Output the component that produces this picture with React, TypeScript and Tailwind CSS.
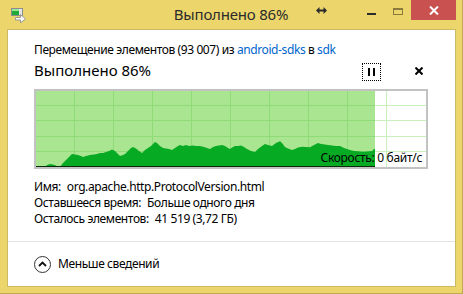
import React from "react";

const font = { fontFamily: '"Noto Sans", "Open Sans", sans-serif' };

// speed graph points (x, y) inside a 390x76 plot
const curve: [number, number][] = [
  [0, 76], [9, 76], [11, 74], [14, 73], [17, 73.5], [20, 74.5], [22, 76], [24, 76],
  [27, 72], [30, 69], [33, 66], [36, 63], [39, 63.5], [42, 64], [45, 65], [47, 66],
  [50, 65], [54, 64], [58, 63.5], [61, 63], [64, 62], [67, 62], [70, 61], [73, 60],
  [76, 58.5], [79, 60], [82, 63], [84, 65], [87, 64], [89, 63], [92, 60], [95, 57],
  [97, 56], [100, 57.5], [103, 60], [106, 62], [109, 59], [112, 57], [115, 55], [117, 53],
  [119, 51], [121, 52], [124, 55], [127, 57], [130, 57.5], [133, 58], [136, 59], [139, 57],
  [142, 55], [144, 54], [147, 55], [150, 54], [153, 55], [157, 54.5], [160, 55], [164, 55],
  [168, 56], [171, 57], [174, 58], [177, 56], [180, 55], [183, 54.5], [186, 54], [189, 55],
  [192, 57], [194, 58], [197, 56], [199, 55], [202, 55], [205, 54.5], [208, 56], [211, 58],
  [215, 60], [219, 61], [222, 58], [226, 55], [229, 53], [232, 54], [236, 55], [240, 52],
  [244, 50.3], [246, 52], [249, 56], [252, 57.5], [256, 59], [259, 58], [262, 56.5], [266, 55.7],
  [270, 56], [274, 56.3], [278, 54], [282, 52], [285, 53], [289, 53.5], [292, 54], [296, 54.5],
  [300, 55], [304, 55], [308, 57], [311, 58], [314, 59], [318, 60], [322, 60.3], [327, 60.7],
  [331, 60.5], [336, 60], [338, 58], [339, 58], [339, 76],
];

function TitleIcon() {
  return (
    <svg width="15" height="15" viewBox="0 0 15 15">
      <rect x="0.5" y="0.5" width="11" height="7" fill="#e6e6e6" stroke="#8c8c8c" />
      <rect x="1" y="1" width="7" height="2" fill="#9be59a" />
      <rect x="1" y="3" width="7" height="4" fill="#1faa3a" />
      <path d="M4.5 9.5h5v-3l5 4.25-5 4.25v-3h-5z" fill="#fafafa" stroke="#9a9a9a" />
    </svg>
  );
}

function Graph() {
  const W = 390;
  const H = 76;
  const done = 339;
  const vx = Array.from({ length: 9 }, (_, i) => 39 * (i + 1) - 0.5);
  const hy = Array.from({ length: 4 }, (_, i) => Math.round(15.2 * (i + 1)) - 0.5);
  return (
    <div className="relative w-[394px] h-[80px] border-2 border-[#c2c2c2] bg-white">
      <svg width={W} height={H} viewBox={`0 0 ${W} ${H}`} className="block">
        <rect x="0" y="0" width={done} height={H} fill="#aae592" />
        {vx.map((x) => (
          <line key={x} x1={x} x2={x} y1="0" y2={H} stroke={x < done ? "#8fdb78" : "#c9f0bd"} strokeWidth="1" />
        ))}
        {hy.map((y) => (
          <g key={y}>
            <line x1="0" x2={done} y1={y} y2={y} stroke="#8fdb78" strokeWidth="1" />
            <line x1={done} x2={W} y1={y} y2={y} stroke="#c9f0bd" strokeWidth="1" />
          </g>
        ))}
        <polygon points={curve.map((p) => p.join(",")).join(" ")} fill="#06aa23" />
        <line x1="0" x2={done} y1="75.5" y2="75.5" stroke="#0a2a0a" strokeWidth="1" />
      </svg>
      <span className="absolute right-[4px] bottom-[1px] text-[12px] leading-[16px] tracking-[-0.3px] text-black" style={font}>
        Скорость: 0 байт/с
      </span>
    </div>
  );
}

export default function App() {
  return (
    <div
      className="w-[463px] h-[294px] flex flex-col bg-[#ecd66c] border-r border-b border-[#c0aa52] overflow-hidden"
      style={font}
    >
      {/* title bar */}
      <div className="h-[29px] grid grid-cols-[1fr_auto_1fr] items-start">
        <div className="pl-[11px] pt-[8px]">
          <TitleIcon />
        </div>
        <div className="pt-[4px] text-[15px] leading-[20px] tracking-[-0.2px] text-[#2b2b2b]">Выполнено 86%</div>
        <div className="flex justify-end items-start pr-[6px]">
          <div className="w-[26px] h-[20px] flex items-center justify-center">
            <svg width="11" height="7" viewBox="0 0 11 7">
              <path d="M2 3.5h7" stroke="#2b2b2b" strokeWidth="2" />
              <path d="M0 3.5L3.5 0v7zM11 3.5L7.5 0v7z" fill="#2b2b2b" />
            </svg>
          </div>
          <div className="ml-[24px] w-[27px] h-[20px] flex items-center justify-center">
            <div className="mt-[7px] w-[9px] h-[2px] bg-[#2b2b2b]" />
          </div>
          <div className="w-[26px] h-[20px] flex items-start justify-center pt-[8px]">
            <div className="w-[10px] h-[7px] border border-t-2 border-[#8a7a3c]" />
          </div>
          <div className="w-[45px] h-[20px] bg-[#c9514f] flex items-center justify-center">
            <svg width="10" height="9" viewBox="0 0 10 9">
              <path d="M1 0.5l8 8M9 0.5l-8 8" stroke="#fff" strokeWidth="2" />
            </svg>
          </div>
        </div>
      </div>

      {/* client area */}
      <div className="ml-[7px] mr-[6px] mb-[6px] flex-1 flex flex-col bg-white border border-[#cdba62] text-black">
        <div className="pl-[26px] pr-[27px] pt-[12px]">
          <div className="text-[12px] leading-[16px] tracking-[-0.4px]">
            Перемещение элементов (93 007) из <span className="text-[#0066cc]">android-sdks</span> в{" "}
            <span className="text-[#0066cc]">sdk</span>
          </div>
          <div className="mt-[2px] flex items-start">
            <div className="flex-1 text-[15px] leading-[20px]">Выполнено 86%</div>
            <div className="mt-[3px] w-[19px] h-[18px] border border-dotted border-black flex items-center justify-center gap-[3px]">
              <div className="w-[2px] h-[8px] bg-black" />
              <div className="w-[2px] h-[8px] bg-black" />
            </div>
            <div className="ml-[33px] mr-[4px] mt-[6px] w-[10px] h-[10px] flex items-center justify-center">
              <svg width="8" height="8" viewBox="0 0 8 8">
                <path d="M0.5 0.5l7 7M7.5 0.5l-7 7" stroke="#000" strokeWidth="2" />
              </svg>
            </div>
          </div>
          <div className="mt-[8px]">
            <Graph />
          </div>
          <div className="mt-[10px] text-[12px] leading-[16px] tracking-[-0.4px]">
            <div>
              <span className="mr-[6px]">Имя:</span>org.apache.http.ProtocolVersion.html
            </div>
            <div>
              <span className="mr-[6px]">Оставшееся время:</span>Больше одного дня
            </div>
            <div>
              <span className="mr-[6px]">Осталось элементов:</span>41 519 (3,72 ГБ)
            </div>
          </div>
        </div>
        <div className="mt-[14px] h-px bg-[#e3e3e3]" />
        <div className="flex-1 flex items-center pl-[26px]">
          <div className="w-[17px] h-[17px] rounded-full border border-[#333] flex items-center justify-center">
            <svg width="9" height="6" viewBox="0 0 9 6">
              <path d="M1 5l3.5-3.5L8 5" stroke="#111" strokeWidth="1.8" fill="none" />
            </svg>
          </div>
          <span className="ml-[7px] text-[12px] leading-[16px] tracking-[-0.4px]">Меньше сведений</span>
        </div>
      </div>
    </div>
  );
}
